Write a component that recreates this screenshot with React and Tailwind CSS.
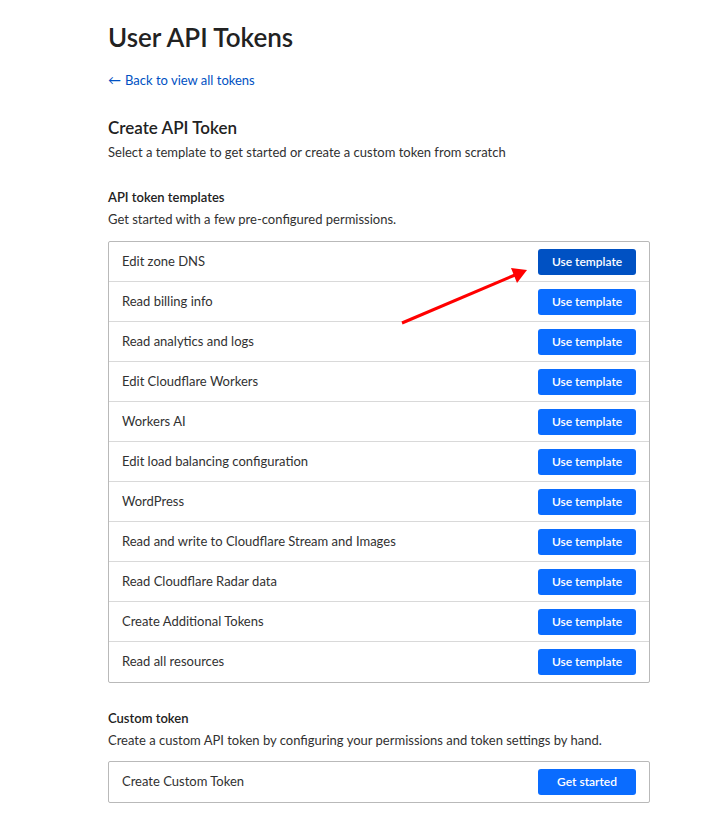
import React from "react";

const templates = [
  "Edit zone DNS",
  "Read billing info",
  "Read analytics and logs",
  "Edit Cloudflare Workers",
  "Workers AI",
  "Edit load balancing configuration",
  "WordPress",
  "Read and write to Cloudflare Stream and Images",
  "Read Cloudflare Radar data",
  "Create Additional Tokens",
  "Read all resources",
];

function BlueButton({ children, dark }) {
  return (
    <button
      className={`w-[98px] h-[26px] rounded-[3px] text-white text-[12px] font-semibold ${dark ? "bg-[#0051c3]" : "bg-[#0a6cff]"}`}
    >
      {children}
    </button>
  );
}

function Row({ label, dark, last, children }) {
  return (
    <div className={`h-10 flex items-center justify-between pl-[13px] pr-[13px] ${last ? "" : "border-b border-[#d9d9d9]"}`}>
      <span className="text-[13px] text-[#313131]">{label}</span>
      {children ?? <BlueButton dark={dark}>Use template</BlueButton>}
    </div>
  );
}

export default function App() {
  return (
    <div
      className="relative min-h-[828px] bg-white text-[#313131]"
      style={{ fontFamily: '"Segoe UI", Lato, "Noto Sans", sans-serif' }}
    >
      <div className="w-[542px] ml-[108px] pt-[20px]">
        <h1 className="text-[26px] font-semibold leading-[34px] text-[#222]">User API Tokens</h1>

        <a className="mt-[17px] flex items-center gap-[4px] text-[13px] text-[#0051c3] leading-[18px]">
          <span>←</span>
          <span>Back to view all tokens</span>
        </a>

        <h2 className="mt-[28px] text-[17px] font-semibold leading-[22px] text-[#222]">Create API Token</h2>
        <p className="mt-[4px] text-[13px] leading-[18px]">
          Select a template to get started or create a custom token from scratch
        </p>

        <h3 className="mt-[27px] text-[13px] font-semibold leading-[18px] text-[#222]">API token templates</h3>
        <p className="mt-[4px] text-[13px] leading-[18px]">Get started with a few pre-configured permissions.</p>

        <div className="mt-[13px] border border-[#b9b9b9] rounded-[2px]">
          {templates.map((t, i) => (
            <Row key={t} label={t} dark={i === 0} last={i === templates.length - 1} />
          ))}
        </div>

        <h3 className="mt-[26px] text-[13px] font-semibold leading-[18px] text-[#222]">Custom token</h3>
        <p className="mt-[4px] text-[13px] leading-[18px]">
          Create a custom API token by configuring your permissions and token settings by hand.
        </p>

        <div className="mt-[12px] border border-[#b9b9b9] rounded-[2px]">
          <Row label="Create Custom Token" last>
            <BlueButton>Get started</BlueButton>
          </Row>
        </div>
      </div>

      {/* red annotation arrow */}
      <svg className="absolute left-0 top-0 pointer-events-none" width="720" height="828">
        <line x1="402" y1="323" x2="515" y2="275" stroke="#ff0000" strokeWidth="3" />
        <polygon points="527,270 511,268 517,283" fill="#ff0000" />
      </svg>
    </div>
  );
}
